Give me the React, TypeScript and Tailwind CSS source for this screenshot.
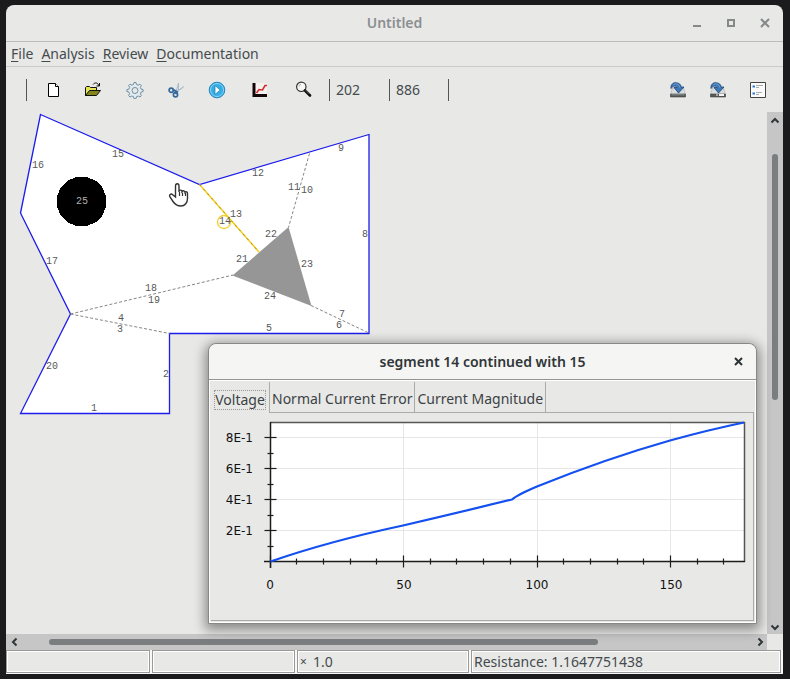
import type { ReactNode } from "react";

const SANS = "font-['Noto_Sans',sans-serif]";

function Gear() {
  return (
    <svg width="18" height="18" viewBox="0 0 18 18" fill="#e3eaee" stroke="#6d8ea4" strokeWidth="1" strokeLinejoin="round">
      <path d="M8 1.500h2l.5 2 1.700.7 1.800-1 1.400 1.400-1 1.800.7 1.700 2 .5v2l-2 .5-.7 1.700 1 1.800-1.400 1.400-1.800-1-1.700.7-.5 2H8l-.5-2-1.700-.7-1.800 1-1.400-1.400 1-1.800-.7-1.700-2-.5v-2l2-.5.7-1.700-1-1.800L4 3.200l1.800 1 1.700-.7z" />
      <circle cx="9" cy="9.500" r="3" fill="#e8e8e7" />
    </svg>
  );
}

function NewFile() {
  return (
    <svg width="16" height="16" viewBox="0 0 16 16" fill="white" stroke="black">
      <path d="M3.500 1.500h7l3 3v10h-10z" />
      <path d="M10.500 1.500v3h3" />
    </svg>
  );
}

function OpenFolder() {
  return (
    <svg width="18" height="16" viewBox="0 0 18 16" stroke="#111">
      <path d="M.500 14V5.500l1-1h3l1 1h6V9" fill="#e4e45a" />
      <path d="M.500 13.500l4-5h11l-4 5z" fill="#85851c" />
      <path d="M8 2.500c2-2.500 5-2 6 1.500M14.500 1v3h-3" fill="none" />
    </svg>
  );
}

function Scissors() {
  return (
    <svg width="17" height="16" viewBox="0 0 17 16" fill="none">
      <path d="M11.500 1v8L9 10z" fill="#dce5ec" stroke="#9fb2c1" strokeWidth=".8" />
      <path d="M16.500 4.500L9 10.500 8 8.500 14.500 7z" fill="#e8eef2" stroke="#9fb2c1" strokeWidth=".8" />
      <path d="M6 7.500l4 2.500-1.500 2" stroke="#2e6395" strokeWidth="2" />
      <circle cx="4.200" cy="8.200" r="2.100" stroke="#35699b" strokeWidth="1.700" />
      <circle cx="8.500" cy="12.700" r="2.100" stroke="#35699b" strokeWidth="1.700" />
    </svg>
  );
}

function Play() {
  return (
    <svg width="18" height="18" viewBox="0 0 18 18">
      <circle cx="9" cy="9" r="7.800" fill="#35aee6" stroke="#2585bd" />
      <circle cx="9" cy="9" r="6.500" fill="none" stroke="#8bd4f4" />
      <path d="M7 4.500L12.200 9 7 13.500z" fill="white" stroke="#1b76ac" strokeWidth=".7" />
    </svg>
  );
}

function PlotIcon() {
  return (
    <svg width="16" height="16" viewBox="0 0 16 16" fill="none">
      <path d="M4 1h12v11H4z" fill="#f5f1ef" />
      <path d="M3 1v12.500H16" stroke="#140606" strokeWidth="3" />
      <path d="M5.500 11L8 7.500l3.500.500 2.500-4.500H16" stroke="#d32b2b" strokeWidth="1.600" />
    </svg>
  );
}

function Magnifier() {
  return (
    <svg width="17" height="17" viewBox="0 0 17 17">
      <circle cx="6.300" cy="5.800" r="4.700" fill="#f7f7f7" stroke="#333" strokeWidth="1.200" />
      <path d="M4 5.500a2.300 2.300 0 0 1 2-2.200" stroke="#aaa" fill="none" />
      <path d="M10 9.500l5 5" stroke="#111" strokeWidth="2.700" strokeLinecap="round" />
      <path d="M10.500 9l4 4" stroke="#999" strokeWidth=".6" />
    </svg>
  );
}

function SaveIcon({ partial = false }: { partial?: boolean }) {
  return (
    <svg width="16" height="16" viewBox="0 0 16 16">
      <path d="M2.500 6h11l2 6.500H.500z" fill="#dadedf" stroke="#a7aaab" strokeWidth=".6" />
      <path d="M.500 12h15v3H.500z" fill="#555b59" stroke="#3d4241" strokeWidth=".6" />
      {partial ? <path d="M9 12h5v2H9zM6.500 12h1v2h-1z" fill="#f4f4f4" /> : <path d="M1.500 12.800h13" stroke="#8b908e" />}
      <path d="M1 6.500C.500 2.500 3 .500 6 .700c3 .2 5 1.600 5 4.300h3L8.500 11 4 5.500h2.700C6 3.500 3 3.500 1 6.500z" fill="#3f78b8" stroke="#1d4470" strokeWidth=".8" />
      <path d="M3 3c2-2 6-1.500 6.800 2.500" fill="none" stroke="#7ca9d8" strokeWidth=".8" />
    </svg>
  );
}

function ListIcon() {
  return (
    <svg width="16" height="16" viewBox="0 0 16 16">
      <path d="M.500.500h15v15H.500z" fill="#fbfbfb" stroke="#444" />
      <path d="M6 3.500h7M6 5.500h3M6 10.500h6M6 12.500h3" stroke="#aaa" />
      <path d="M2.500 4.500h2.500M2.500 11.500h2.500" stroke="#2c78d6" strokeWidth="2" />
    </svg>
  );
}

function Chevron({ dir }: { dir: "up" | "down" | "left" | "right" }) {
  const d = {
    up: "M1.500 6.500l3.500-3.500 3.500 3.500",
    down: "M1.500 3.500l3.500 3.500 3.500-3.500",
    left: "M6.500 1.500l-3.500 3.500 3.500 3.500",
    right: "M3.500 1.500l3.500 3.500-3.500 3.500",
  }[dir];
  return (
    <svg width="10" height="10" viewBox="0 0 10 10">
      <path d={d} fill="none" stroke="#30373a" strokeWidth="2" />
    </svg>
  );
}

const LABELS: [string, number, number][] = [
  ["1", 94, 411], ["2", 166, 377], ["3", 120, 332], ["4", 121, 321], ["5", 269, 331],
  ["6", 339, 328], ["7", 342, 317], ["8", 365, 237], ["9", 341, 151], ["10", 307, 193],
  ["11", 294, 190], ["12", 258, 176], ["13", 236, 217], ["14", 225, 224], ["15", 118, 157],
  ["16", 38, 168], ["17", 52, 264], ["18", 151, 291], ["19", 154, 303], ["20", 52, 369],
  ["21", 242, 262], ["22", 271, 237], ["23", 307, 267], ["24", 270, 299],
];

function Geometry() {
  return (
    <svg className="block shrink-0" width="761" height="522" viewBox="6 112 761 522" role="img" aria-label="Segment geometry">
      <path
        d="M40.500 114.500L199.500 184.500 369 134.500V333.500H169.500V413.500H20.500L70.500 314 20.500 213z"
        fill="white"
        stroke="#1c1cec"
        strokeWidth="1.300"
      />
      <path shapeRendering="crispEdges" d="M76 177h11l9 4 6 6 4 9v11l-4 9-6 6-9 4H76l-9-4-6-6-4-9v-11l4-9 6-6z" fill="black" />
      <g fill="none" stroke="#858585" strokeDasharray="3 2">
        <path d="M309.500 153.500L288.500 227.500M70.500 314L233 275M70.500 314L169.500 333.500M311 305.500L369 333" />
      </g>
      <path d="M288.500 227L232.500 275.500 311.500 306z" fill="#969696" />
      <path d="M199.500 184.500L259 252" stroke="#f6cc18" strokeWidth="1.500" />
      <path d="M199.500 184.500L259 252" stroke="#a08a30" strokeDasharray="2 4" />
      <circle cx="224" cy="222" r="6.500" fill="none" stroke="#f0d030" strokeWidth="1.300" />
      <g className="font-['Liberation_Mono',monospace] text-[10px]" fill="#585858" textAnchor="middle">
        {LABELS.map(([t, x, y]) => (
          <text key={t} x={x} y={y}>{t}</text>
        ))}
        <text x="82" y="204" fill="#b0b0b0">25</text>
      </g>
      <path
        d="M175.500 197v-11c0-3 3.500-3 3.500 0v6-1c1-1.500 3-1 3 .5 1-1.200 3-.7 3 .8 1-1 2.500-.3 2.500 1.200v5c0 4-2.500 7.500-6.500 7.500-4 0-6-1.500-8-4.500l-3.300-5c-.8-2 1.500-3.300 3-1.700z"
        fill="white"
        stroke="#333"
        strokeWidth="1.400"
      />
      <path d="M179.500 192v4M182.500 192.500v3.500M185.500 193v3" stroke="#333" strokeWidth="1.200" />
    </svg>
  );
}

const X0 = 60;
const Y0 = 149.5;
const X_STEP = 26.7;
const Y_STEP = 15.5;

function VoltageChart() {
  const xs = Array.from({ length: 18 }, (_, i) => i);
  const ys = [1, 2, 3, 4, 5, 6, 7, 8];
  return (
    <svg className="block" width="543" height="207" viewBox="1 1 543 207" role="img" aria-label="Voltage plot">
      <path d="M60.500 10.500H534.500V149.500H60.500z" fill="white" />
      <g stroke="#e6e6e6">
        {[5, 10, 15].map((i) => (
          <line key={i} x1={Math.floor(X0 + i * X_STEP) + 0.5} x2={Math.floor(X0 + i * X_STEP) + 0.5} y1="11" y2="149" />
        ))}
        {[2, 4, 6, 8].map((i) => (
          <line key={i} x1="61" x2="534" y1={Y0 - i * Y_STEP} y2={Y0 - i * Y_STEP} />
        ))}
      </g>
      <path d="M60 10.500H534.500V150" fill="none" stroke="#555" strokeWidth="1.500" />
      <path d="M60.500 10V156M54 149.500H535" fill="none" stroke="#1c1c1c" strokeWidth="1.500" />
      <g stroke="#1c1c1c" strokeWidth="1.200">
        {xs.map((i) => {
          const x = Math.floor(X0 + i * X_STEP) + 0.5;
          const r = i % 5 === 0 ? 6 : 3;
          return <line key={i} x1={x} x2={x} y1={Y0 - r} y2={Y0 + r} />;
        })}
        {ys.map((i) => {
          const y = Math.floor(Y0 - i * Y_STEP) + 0.5;
          const r = i % 2 === 0 ? 6 : 3;
          return <line key={i} x1={60.5 - r} x2={60.5 + r} y1={y} y2={y} />;
        })}
      </g>
      <path
        d="M60.500 149.500Q120 129 193 113.500Q255 99 302 87.500Q307 83 327 74.500Q395 47 460 28.500Q498 18 534 10.500"
        fill="none"
        stroke="#1450f0"
        strokeWidth="2.200"
      />
      <g className="font-['DejaVu_Sans',sans-serif] text-[12px]" fill="#111">
        {[2, 4, 6, 8].map((i) => (
          <text key={i} x="43" y={Math.round(Y0 - i * Y_STEP) + 4} textAnchor="end">{`${i}E-1`}</text>
        ))}
        {[0, 50, 100, 150].map((v) => (
          <text key={v} x={Math.round(X0 + (v / 10) * X_STEP)} y="177" textAnchor="middle">{v}</text>
        ))}
      </g>
    </svg>
  );
}

function Tool({ label, size = "w-[41px]", children }: { label: string; size?: string; children: ReactNode }) {
  return (
    <button type="button" aria-label={label} className={`flex h-8 items-center justify-center ${size}`}>
      {children}
    </button>
  );
}

function Dialog() {
  const tabs = ["Normal Current Error", "Current Magnitude"];
  return (
    <section
      role="dialog"
      aria-label="segment 14 continued with 15"
      className="absolute top-[231px] left-[202px] w-[549px] rounded-t-lg border border-[#888] bg-[#e8e8e7] shadow-[0_3px_12px_3px_rgba(0,0,0,0.4)]"
    >
      <header className="relative flex h-9 items-center justify-center rounded-t-lg border-b border-[#949494] bg-[#f5f5f4]">
        <h2 className="text-sm font-semibold text-[#303638]">segment 14 continued with 15</h2>
        <button type="button" aria-label="Close" className="absolute right-3 flex size-3 items-center justify-center">
          <svg width="9" height="9" viewBox="0 0 9 9"><path d="M1 1l7 7M8 1l-7 7" stroke="#2e3436" strokeWidth="2" /></svg>
        </button>
      </header>
      <div className="border border-white p-px pt-0">
        <div role="tablist" className="flex h-8 items-stretch pt-px text-sm text-[#3c4244]">
          <button type="button" role="tab" aria-selected="true" className="flex w-[58px] items-center justify-center pt-1">
            <span className="border border-dotted border-[#999] leading-[18px]">Voltage</span>
          </button>
          {tabs.map((t) => (
            <button key={t} type="button" role="tab" aria-selected="false" className="border-r border-b border-[#aaa] px-0.5 pt-1 whitespace-nowrap nth-2:border-l">
              {t}
            </button>
          ))}
          <span className="flex-1 border-b border-[#aaa]" />
        </div>
        <div role="tabpanel" className="border-r border-b border-[#aaa]">
          <VoltageChart />
        </div>
      </div>
    </section>
  );
}

export default function App() {
  const status = "flex items-center border border-[#999] pl-0.5 outline outline-white -outline-offset-2 bg-[#e8e8e7]";
  return (
    <div className={`${SANS} flex min-h-screen flex-col bg-[#1b1b1d] pt-[5px] pr-[7px] pb-[5px] pl-1.5 text-sm text-[#454b4d]`}>
      <main className="flex flex-1 flex-col overflow-hidden rounded-t-lg bg-[#e8e8e7]">
        <header className="relative flex h-[37px] items-center justify-center border-b border-[#bcbcbb]">
          <h1 className="font-semibold text-[#8c8f90]">Untitled</h1>
          <div className="absolute right-[11px] flex gap-5">
            <button type="button" aria-label="Minimize" className="flex size-3.5 items-center justify-center">
              <svg width="10" height="10" viewBox="0 0 10 10"><path d="M1 8h8" stroke="#85898a" strokeWidth="2" /></svg>
            </button>
            <button type="button" aria-label="Maximize" className="flex size-3.5 items-center justify-center">
              <svg width="10" height="10" viewBox="0 0 10 10"><path d="M2 2h6v6H2z" fill="none" stroke="#85898a" strokeWidth="2" /></svg>
            </button>
            <button type="button" aria-label="Close" className="flex size-3.5 items-center justify-center">
              <svg width="10" height="10" viewBox="0 0 10 10"><path d="M1 1l8 8M9 1l-8 8" stroke="#85898a" strokeWidth="2" /></svg>
            </button>
          </div>
        </header>
        <nav className="flex h-[25px] items-center gap-2 border-b border-[#cacaca] px-[5px]">
          {["File", "Analysis", "Review", "Documentation"].map((m) => (
            <button key={m} type="button">
              <span className="underline underline-offset-2">{m[0]}</span>{m.slice(1)}
            </button>
          ))}
        </nav>
        <div role="toolbar" className="flex h-[45px] items-center pr-[5px] pl-5">
          <span className="mr-[5px] h-[22px] w-px bg-[#555]" />
          <Tool label="New"><NewFile /></Tool>
          <Tool label="Open"><OpenFolder /></Tool>
          <Tool label="Settings"><Gear /></Tool>
          <Tool label="Cut"><Scissors /></Tool>
          <Tool label="Run"><Play /></Tool>
          <Tool label="Plot" size="w-11"><PlotIcon /></Tool>
          <Tool label="Zoom" size="w-11"><Magnifier /></Tool>
          <output className="ml-1 flex h-[22px] w-[60px] items-center border-l border-[#555] pl-1.5">202</output>
          <output className="flex h-[22px] w-[59px] items-center border-l border-[#555] pl-1.5">886</output>
          <span className="h-[22px] w-px bg-[#555]" />
          <div className="ml-auto flex">
            <Tool label="Save" size="w-10"><SaveIcon /></Tool>
            <Tool label="Save as" size="w-10"><SaveIcon partial /></Tool>
            <Tool label="Properties" size="w-10"><ListIcon /></Tool>
          </div>
        </div>
        <div className="flex flex-1">
          <div className="relative min-w-0 flex-1">
            <Geometry />
            <Dialog />
          </div>
          <div className="flex w-4 flex-col items-center bg-[#c5c6c5]">
            <button type="button" aria-label="Scroll up" className="flex h-[42px] justify-center pt-1"><Chevron dir="up" /></button>
            <div className="h-[246px] w-1.5 rounded-sm bg-[#7b7e7e]" />
            <button type="button" aria-label="Scroll down" className="mt-auto pb-0.5"><Chevron dir="down" /></button>
          </div>
        </div>
        <div className="flex h-4">
          <div className="flex flex-1 items-center bg-[#c5c6c5]">
            <button type="button" aria-label="Scroll left" className="w-[43px] pl-1"><Chevron dir="left" /></button>
            <div className="h-1.5 w-[549px] rounded-sm bg-[#7b7e7e]" />
            <button type="button" aria-label="Scroll right" className="mr-0.5 ml-auto"><Chevron dir="right" /></button>
          </div>
          <span className="w-4" />
        </div>
        <footer className="flex h-6 gap-0.5 bg-[#f8f8f8] pr-0.5 pb-px">
          <output className={`${status} w-36`} />
          <output className={`${status} w-[143px]`} />
          <output className={`${status} w-[172px]`}><small className="mr-1.5 text-xs">×</small> 1.0</output>
          <output className={`${status} flex-1`}>Resistance: 1.1647751438</output>
        </footer>
      </main>
    </div>
  );
}
